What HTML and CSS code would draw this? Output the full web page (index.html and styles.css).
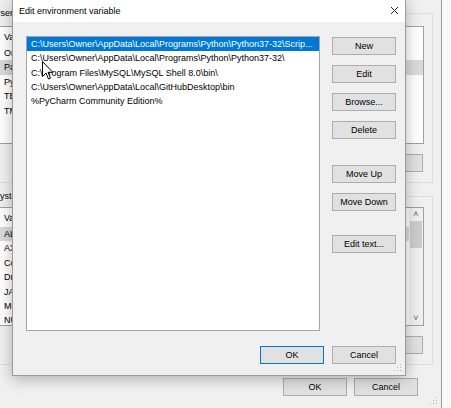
FILE: index.html
```html
<!DOCTYPE html>
<html lang="en">
<head>
    <meta charset="UTF-8">
    <title>Edit environment variable</title>
    <link rel="stylesheet" href="styles.css">
</head>
<body>
    <!-- Janela de fundo: Environment Variables -->
    <div class="bgwin">
        <div class="group user-group">
            <span class="glabel">User variables for Owner</span>
            <div class="vlist user-list">
                <div class="vcol">
                    <div class="vhead">Variable</div>
                    <div class="vrow">OneDrive</div>
                    <div class="vrow sel">Path</div>
                    <div class="vrow">PyCharm Community Edition</div>
                    <div class="vrow">TEMP</div>
                    <div class="vrow">TMP</div>
                </div>
            </div>
            <div class="gbtns">
                <span class="btn">New...</span>
                <span class="btn">Edit...</span>
                <span class="btn">Delete</span>
            </div>
        </div>

        <div class="group sys-group">
            <span class="glabel">System variables</span>
            <div class="vlist sys-list">
                <div class="vcol">
                    <div class="vhead">Variable</div>
                    <div class="vrow sel">ALLUSERSPROFILE</div>
                    <div class="vrow">AXIS2C_HOME</div>
                    <div class="vrow">ComSpec</div>
                    <div class="vrow">DriverData</div>
                    <div class="vrow">JAVA_HOME</div>
                    <div class="vrow">MOZ_PLUGIN_PATH</div>
                    <div class="vrow">NUMBER_OF_PROCESSORS</div>
                </div>
                <div class="vscroll">
                    <span class="arrow">&#708;</span>
                    <span class="thumb"></span>
                    <span class="spacer"></span>
                    <span class="arrow">&#709;</span>
                </div>
            </div>
            <div class="gbtns">
                <span class="btn">New...</span>
                <span class="btn">Edit...</span>
                <span class="btn">Delete</span>
            </div>
        </div>

        <div class="winfoot">
            <span class="btn">OK</span>
            <span class="btn">Cancel</span>
        </div>
        <svg class="grip" width="8" height="8" viewBox="0 0 8 8">
            <rect x="6" y="0" width="1" height="1" fill="#b5b5b5"/>
            <rect x="3" y="3" width="1" height="1" fill="#b5b5b5"/>
            <rect x="6" y="3" width="1" height="1" fill="#b5b5b5"/>
            <rect x="0" y="6" width="1" height="1" fill="#b5b5b5"/>
            <rect x="3" y="6" width="1" height="1" fill="#b5b5b5"/>
            <rect x="6" y="6" width="1" height="1" fill="#b5b5b5"/>
        </svg>
    </div>

    <!-- Dialogo em primeiro plano -->
    <div class="dialog">
        <div class="titlebar">
            <span class="title">Edit environment variable</span>
            <svg class="close" width="9" height="9" viewBox="0 0 9 9">
                <path d="M1 1 L8 8 M8 1 L1 8" stroke="#222" stroke-width="1" fill="none"/>
            </svg>
        </div>
        <div class="dbody">
            <div class="plist">
                <div class="prow sel">C:\Users\Owner\AppData\Local\Programs\Python\Python37-32\Scrip...</div>
                <div class="prow">C:\Users\Owner\AppData\Local\Programs\Python\Python37-32\</div>
                <div class="prow">C:\Program Files\MySQL\MySQL Shell 8.0\bin\</div>
                <div class="prow">C:\Users\Owner\AppData\Local\GitHubDesktop\bin</div>
                <div class="prow">%PyCharm Community Edition%</div>
            </div>
            <div class="dbtns">
                <span class="btn">New</span>
                <span class="btn">Edit</span>
                <span class="btn">Browse...</span>
                <span class="btn">Delete</span>
                <span class="btn gap-top">Move Up</span>
                <span class="btn">Move Down</span>
                <span class="btn gap-top2">Edit text...</span>
            </div>
        </div>
        <div class="dfoot">
            <span class="btn default">OK</span>
            <span class="btn">Cancel</span>
        </div>
        <svg class="grip dgrip" width="8" height="8" viewBox="0 0 8 8">
            <rect x="6" y="0" width="1" height="1" fill="#b5b5b5"/>
            <rect x="3" y="3" width="1" height="1" fill="#b5b5b5"/>
            <rect x="6" y="3" width="1" height="1" fill="#b5b5b5"/>
            <rect x="0" y="6" width="1" height="1" fill="#b5b5b5"/>
            <rect x="3" y="6" width="1" height="1" fill="#b5b5b5"/>
            <rect x="6" y="6" width="1" height="1" fill="#b5b5b5"/>
        </svg>
    </div>

    <!-- Ponteiro do mouse -->
    <svg class="cursor" width="12" height="19" viewBox="0 0 12 19">
        <path d="M0.5 0.5 L0.5 15.5 L4 12 L6.5 18 L8.5 17.2 L6 11.3 L10.8 11.3 Z" fill="#fff" stroke="#000" stroke-width="1"/>
    </svg>
</body>
</html>
```

FILE: styles.css
```css
* {
    box-sizing: border-box;
}

body {
    margin: 0;
    width: 451px;
    height: 408px;
    overflow: hidden;
    position: relative;
    background: #f9f9f9;
    font-family: 'Liberation Sans', Arial, sans-serif;
    font-size: 9px;
    color: #000;
}

/* Janela de fundo */
.bgwin {
    position: relative;
    margin-left: -10px;
    width: 452px;
    height: 408px;
    padding: 13px 0 0 6px;
    background: #f0f0f0;
    border-right: 1px solid #9c9c9c;
}

.group {
    position: relative;
    width: 437px;
    border: 1px solid #dcdcdc;
    padding: 12px 8px 10px 2px;
}

.sys-group {
    margin-top: 13px;
    padding-top: 10px;
}

.glabel {
    position: absolute;
    top: -6px;
    left: -5px;
    padding: 0 2px;
    background: #f0f0f0;
    line-height: 10px;
}

.vlist {
    display: flex;
    background: #fff;
    border: 1px solid #a0a0a0;
}

.user-list {
    height: 118px;
}

.sys-list {
    height: 119px;
}

.vcol {
    flex: 1;
}

.vhead {
    height: 19px;
    line-height: 20px;
    padding-left: 4px;
}

.vrow {
    height: 14.4px;
    line-height: 15px;
    padding-left: 4px;
}

.vrow.sel {
    background: #dadada;
}

.vscroll {
    width: 14px;
    display: flex;
    flex-direction: column;
    background: #f0f0f0;
}

.vscroll .arrow {
    height: 13px;
    line-height: 13px;
    text-align: center;
    font-size: 9px;
    color: #606060;
}

.vscroll .thumb {
    height: 27px;
    margin: 0 1px;
    background: #cdcdcd;
}

.vscroll .spacer {
    flex: 1;
}

.gbtns {
    display: flex;
    justify-content: flex-end;
    gap: 8px;
    margin-top: 10px;
    padding-right: 1px;
}

.winfoot {
    display: flex;
    justify-content: flex-end;
    gap: 7px;
    margin-top: 13px;
    padding-right: 23px;
}

.btn {
    display: block;
    width: 64px;
    height: 18px;
    line-height: 16px;
    text-align: center;
    background: #e1e1e1;
    border: 1px solid #adadad;
    white-space: nowrap;
}

.gbtns .btn {
    width: 70px;
}

.grip {
    position: absolute;
    right: 3px;
    bottom: 3px;
}

/* Dialogo */
.dialog {
    position: absolute;
    left: 12px;
    top: -1px;
    width: 394px;
    height: 377px;
    background: #f0f0f0;
    border: 1px solid #9a9a9a;
    box-shadow: 0 3px 14px rgba(0, 0, 0, 0.28);
}

.titlebar {
    position: relative;
    height: 22px;
    background: #fff;
    padding-left: 6px;
    line-height: 23px;
}

.close {
    position: absolute;
    right: 6px;
    top: 6px;
}

.dbody {
    display: flex;
    gap: 12px;
    padding: 14px 9px 0 13px;
}

.plist {
    flex: 1;
    height: 295px;
    background: #fff;
    border: 1px solid #a5a5a5;
}

.prow {
    height: 14.3px;
    line-height: 14px;
    padding-left: 4px;
    white-space: nowrap;
    overflow: hidden;
}

.prow.sel {
    background: #0078d7;
    color: #fff;
}

.dbtns {
    width: 64px;
    display: flex;
    flex-direction: column;
    gap: 10px;
    padding-top: 1px;
}

.dbtns .gap-top {
    margin-top: 16px;
}

.dbtns .gap-top2 {
    margin-top: 14px;
}

.dfoot {
    display: flex;
    justify-content: flex-end;
    gap: 8px;
    margin-top: 15px;
    padding-right: 9px;
}

.btn.default {
    border-color: #0078d7;
}

.cursor {
    position: absolute;
    left: 42px;
    top: 61px;
}
```
